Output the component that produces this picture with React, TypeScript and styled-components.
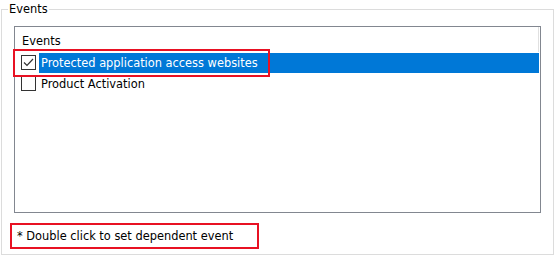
import styled, { createGlobalStyle } from "styled-components";

const Global = createGlobalStyle`
  html, body {
    margin: 0;
    padding: 0;
    background: #ffffff;
  }
  body {
    font-family: "DejaVu Sans", "Liberation Sans", sans-serif;
    font-size: 11.4px;
    color: #000000;
  }
`;

type EventItem = { name: string; checked: boolean; selected: boolean };

const events: EventItem[] = [
  { name: "Protected application access websites", checked: true, selected: true },
  { name: "Product Activation", checked: false, selected: false },
];

const CheckBox = ({ checked }: { checked: boolean }) => (
  <Box>
    {checked && (
      <svg width="13" height="13" viewBox="0 0 13 13">
        <path d="M2 6.5 L5 9.5 L11 3" fill="none" stroke="#333333" strokeWidth="1.2" />
      </svg>
    )}
  </Box>
);

const App = () => {
  return (
    <>
      <Global />
      <Group>
        <Legend>Events</Legend>
        <Body>
          <List>
            <Header>
              <HeaderCell>Events</HeaderCell>
            </Header>
            {events.map((e) => (
              <Row key={e.name}>
                <CheckBox checked={e.checked} />
                <Label $selected={e.selected}>{e.name}</Label>
              </Row>
            ))}
            <Mark />
          </List>
          <Note>* Double click to set dependent event</Note>
        </Body>
      </Group>
    </>
  );
};

export default App;

const Group = styled.fieldset`
  box-sizing: border-box;
  margin: 2px 1px 0 1px;
  padding: 0;
  height: 253px;
  border: 1px solid #dcdcdc;
  min-width: 0;
`;

const Legend = styled.legend`
  margin-left: 6px;
  padding: 0 1px;
  line-height: 14px;
`;

const Body = styled.div`
  display: flex;
  flex-direction: column;
  padding: 10px 8px 0 8px;
`;

const List = styled.div`
  position: relative;
  box-sizing: border-box;
  height: 187px;
  margin: 0 4px;
  border: 1px solid #828790;
  padding-right: 1px;
`;

const Header = styled.div`
  display: flex;
  height: 25px;
  border-right: 1px solid #e0e0e0;
  box-sizing: border-box;
`;

const HeaderCell = styled.div`
  padding: 8px 7px 0;
  line-height: 13px;
`;

const Row = styled.div`
  display: flex;
  align-items: center;
  height: 21px;
  padding-left: 6px;
`;

const Box = styled.div`
  box-sizing: border-box;
  width: 15px;
  height: 15px;
  border: 1px solid #333333;
  background: #ffffff;
  display: flex;
  align-items: center;
  justify-content: center;
  flex: none;
`;

const Label = styled.div<{ $selected: boolean }>`
  flex: 1;
  margin-left: 3px;
  padding-left: 2px;
  height: 20px;
  line-height: 20px;
  white-space: nowrap;
  background: ${(p) => (p.$selected ? "#0078d7" : "transparent")};
  color: ${(p) => (p.$selected ? "#ffffff" : "#000000")};
`;

const Mark = styled.div`
  position: absolute;
  left: -2px;
  top: 22px;
  width: 257px;
  height: 28px;
  box-sizing: border-box;
  border: 2px solid #e81123;
  pointer-events: none;
`;

const Note = styled.div`
  align-self: flex-start;
  box-sizing: border-box;
  margin-top: 10px;
  width: 249px;
  height: 26px;
  padding-left: 5px;
  line-height: 22px;
  border: 2px solid #e81123;
  white-space: nowrap;
`;
